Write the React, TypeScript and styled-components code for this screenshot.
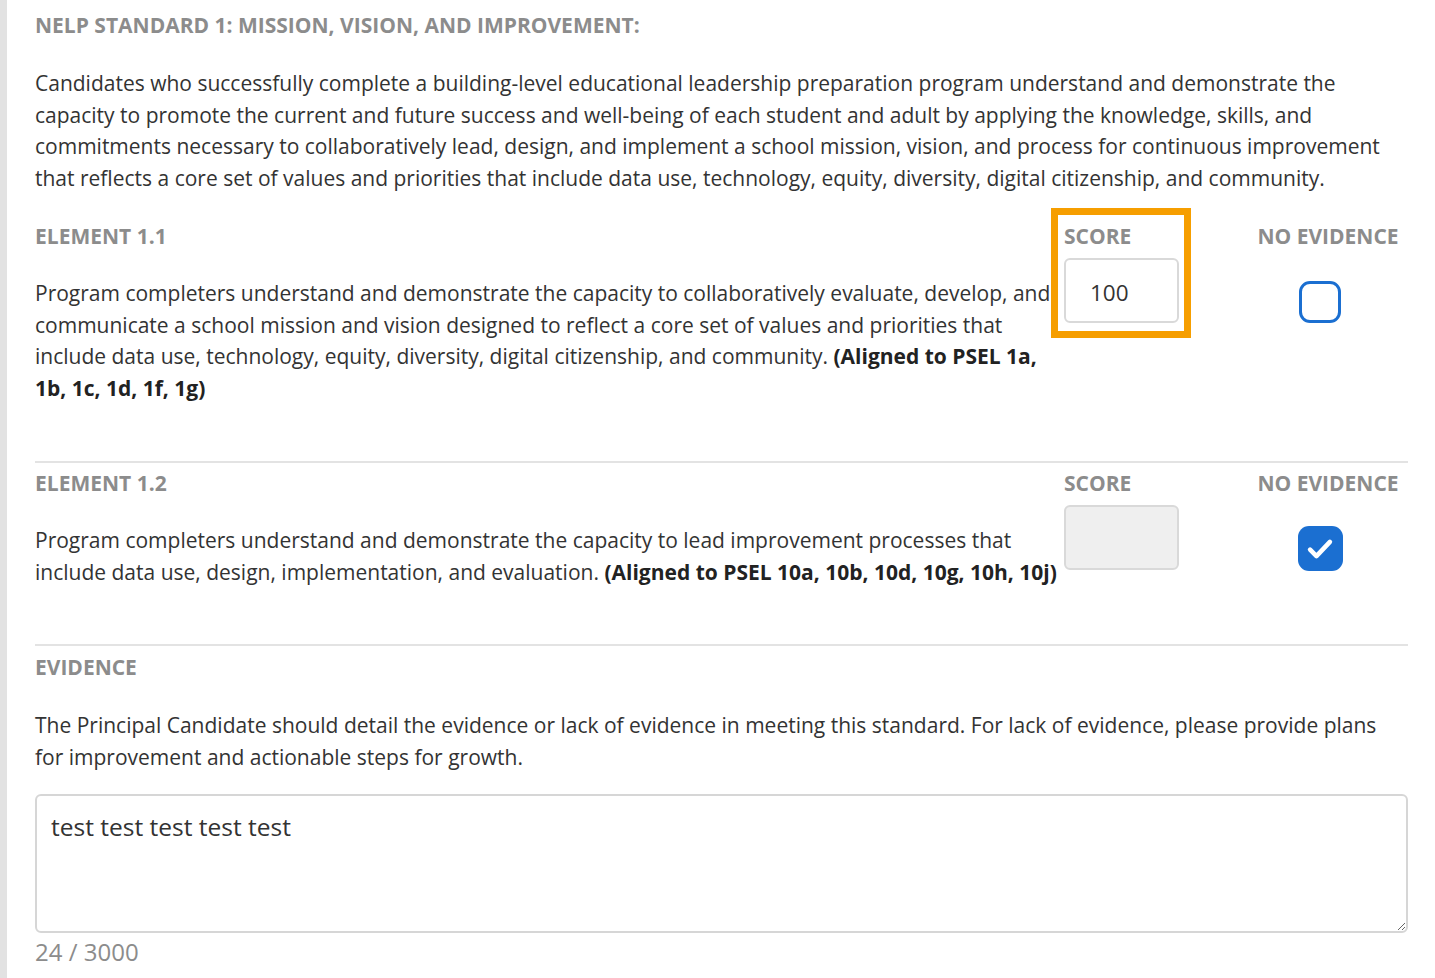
import React from 'react';
import styled, { createGlobalStyle } from 'styled-components';

interface ElementItem {
  id: string;
  text: string;
  aligned: string;
  score: string;
  noEvidence: boolean;
  highlighted?: boolean;
}

const elements: ElementItem[] = [
  {
    id: '1.1',
    text: 'Program completers understand and demonstrate the capacity to collaboratively evaluate, develop, and communicate a school mission and vision designed to reflect a core set of values and priorities that include data use, technology, equity, diversity, digital citizenship, and community.',
    aligned: '(Aligned to PSEL 1a, 1b, 1c, 1d, 1f, 1g)',
    score: '100',
    noEvidence: false,
    highlighted: true,
  },
  {
    id: '1.2',
    text: 'Program completers understand and demonstrate the capacity to lead improvement processes that include data use, design, implementation, and evaluation.',
    aligned: '(Aligned to PSEL 10a, 10b, 10d, 10g, 10h, 10j)',
    score: '',
    noEvidence: true,
  },
];

const evidenceText = 'test test test test test';

const App: React.FC = () => {
  return (
    <>
      <GlobalStyle />
      <Page>
        <Content>
          <Title>NELP STANDARD 1: MISSION, VISION, AND IMPROVEMENT:</Title>
          <Paragraph>
            Candidates who successfully complete a building-level educational leadership preparation program
            understand and demonstrate the capacity to promote the current and future success and well-being of
            each student and adult by applying the knowledge, skills, and commitments necessary to collaboratively
            lead, design, and implement a school mission, vision, and process for continuous improvement that
            reflects a core set of values and priorities that include data use, technology, equity, diversity,
            digital citizenship, and community.
          </Paragraph>

          {elements.map((el, index) => (
            <ElementRow key={el.id} $first={index === 0}>
              <DescCell>
                <Label>ELEMENT {el.id}</Label>
                <Description>
                  {el.text} <strong>{el.aligned}</strong>
                </Description>
              </DescCell>
              <ScoreCell>
                {el.highlighted && <Highlight />}
                <Label>SCORE</Label>
                <ScoreInput
                  type="text"
                  defaultValue={el.score}
                  disabled={el.noEvidence}
                  $disabled={el.noEvidence}
                />
              </ScoreCell>
              <NoEvidenceCell>
                <Label>NO EVIDENCE</Label>
                <CheckBox $checked={el.noEvidence}>
                  {el.noEvidence && (
                    <svg width="34" height="34" viewBox="0 0 24 24" fill="none">
                      <path
                        d="M5 12.5l4.5 4.5L19 7"
                        stroke="#fff"
                        strokeWidth="3.2"
                        strokeLinecap="round"
                        strokeLinejoin="round"
                      />
                    </svg>
                  )}
                </CheckBox>
              </NoEvidenceCell>
            </ElementRow>
          ))}

          <EvidenceSection>
            <Label>EVIDENCE</Label>
            <Paragraph>
              The Principal Candidate should detail the evidence or lack of evidence in meeting this standard. For
              lack of evidence, please provide plans for improvement and actionable steps for growth.
            </Paragraph>
            <TextArea defaultValue={evidenceText} />
            <Counter>{evidenceText.length} / 3000</Counter>
          </EvidenceSection>
        </Content>
      </Page>
    </>
  );
};

export default App;

const GlobalStyle = createGlobalStyle`
  html, body {
    margin: 0;
    padding: 0;
    background: #ffffff;
  }
  body {
    font-family: "Open Sans", "Noto Sans", sans-serif;
    color: #333333;
    overflow: hidden;
  }
`;

const Page = styled.div`
  min-height: 100vh;
  border-left: 7px solid #e2e2e2;
  box-sizing: border-box;
`;

const Content = styled.div`
  padding: 10px 27px 0 28px;
`;

const Title = styled.h2`
  margin: 0;
  font-size: 21px;
  line-height: 30px;
  font-weight: 700;
  color: #8c8c8c;
`;

const Paragraph = styled.p`
  margin: 28px 0 0;
  font-size: 21px;
  line-height: 31.5px;
  color: #333333;
`;

const Label = styled.div`
  font-size: 21px;
  line-height: 30px;
  font-weight: 700;
  color: #8c8c8c;
  white-space: nowrap;
`;

const ElementRow = styled.div<{ $first: boolean }>`
  display: grid;
  grid-template-columns: minmax(0, 1fr) 115px 215px;
  column-gap: 4px;
  padding: ${(p) => (p.$first ? '27px 10px 57px 0' : '5px 10px 56px 0')};
  border-top: ${(p) => (p.$first ? 'none' : '2px solid #e3e3e3')};
`;

const DescCell = styled.div`
  display: flex;
  flex-direction: column;
`;

const Description = styled.p`
  margin: 27px 0 0;
  font-size: 21px;
  line-height: 31.5px;
  color: #333333;

  strong {
    font-weight: 700;
    color: #222222;
  }
`;

const ScoreCell = styled.div`
  position: relative;
  display: flex;
  flex-direction: column;
`;

const Highlight = styled.div`
  position: absolute;
  left: -13px;
  top: -13px;
  width: 140px;
  height: 130px;
  border: 7px solid #f69e00;
  box-sizing: border-box;
  pointer-events: none;
`;

const ScoreInput = styled.input<{ $disabled: boolean }>`
  margin-top: 7px;
  width: 115px;
  height: 65px;
  box-sizing: border-box;
  border: 2px solid #d9d9d9;
  border-radius: 6px;
  padding: 3px 0 0 24px;
  font-family: "Open Sans", "Noto Sans", sans-serif;
  font-size: 22.5px;
  color: #333333;
  background: ${(p) => (p.$disabled ? '#efefef' : '#ffffff')};
  outline: none;
`;

const NoEvidenceCell = styled.div`
  display: flex;
  flex-direction: column;
  align-items: center;
  padding-left: 75px;
`;

const CheckBox = styled.div<{ $checked: boolean }>`
  margin-top: ${(p) => (p.$checked ? '28px' : '30px')};
  margin-right: 16px;
  width: ${(p) => (p.$checked ? '45px' : '42px')};
  height: ${(p) => (p.$checked ? '45px' : '42px')};
  box-sizing: border-box;
  border-radius: 11px;
  border: ${(p) => (p.$checked ? 'none' : '3.5px solid #1b6fd1')};
  background: ${(p) => (p.$checked ? '#1b6fd1' : '#ffffff')};
  display: flex;
  align-items: center;
  justify-content: center;
`;

const EvidenceSection = styled.div`
  border-top: 2px solid #e3e3e3;
  padding-top: 6px;
`;

const TextArea = styled.textarea`
  display: block;
  margin-top: 21px;
  width: 100%;
  height: 139px;
  box-sizing: border-box;
  border: 2px solid #d6d6d6;
  border-radius: 6px;
  padding: 16px 14px;
  font-family: "Open Sans", "Noto Sans", sans-serif;
  font-size: 24.5px;
  line-height: 30px;
  color: #333333;
  resize: vertical;
  outline: none;
`;

const Counter = styled.div`
  margin-top: 4px;
  font-size: 24px;
  line-height: 30px;
  color: #8c8c8c;
`;
